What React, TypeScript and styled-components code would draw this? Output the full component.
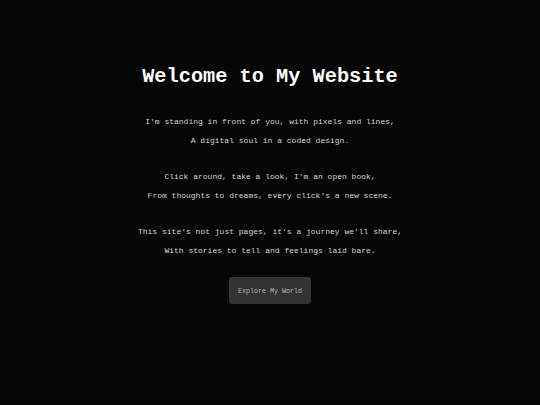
import styled, { createGlobalStyle } from "styled-components";

const GlobalStyle = createGlobalStyle`
  html, body {
    margin: 0;
    padding: 0;
    background-color: #050505;
  }
`;

const Page = styled.main`
  min-height: 405px;
  background-color: #050505;
  color: #d4d4d4;
  font-family: "Liberation Mono", "Courier New", monospace;
  display: flex;
  flex-direction: column;
  align-items: center;
  padding-top: 62px;
  box-sizing: border-box;
`;

const Title = styled.h1`
  margin: 0 0 20px;
  font-size: 20.3px;
  font-weight: 700;
  line-height: 30px;
  color: #ffffff;
`;

const Verse = styled.p`
  margin: 0 0 17px;
  font-size: 8px;
  line-height: 19px;
  text-align: center;
`;

const Button = styled.button`
  width: 82px;
  height: 27px;
  padding: 0;
  border: none;
  border-radius: 3px;
  background-color: #333333;
  color: #b4b4b4;
  font-family: inherit;
  font-size: 6.7px;
  cursor: pointer;
`;

const verses = [
  ["I'm standing in front of you, with pixels and lines,", "A digital soul in a coded design."],
  ["Click around, take a look, I'm an open book,", "From thoughts to dreams, every click's a new scene."],
  ["This site's not just pages, it's a journey we'll share,", "With stories to tell and feelings laid bare."],
];

const App = () => {
  return (
    <>
      <GlobalStyle />
      <Page>
        <Title>Welcome to My Website</Title>
        {verses.map((lines, i) => (
          <Verse key={i}>
            {lines[0]}
            <br />
            {lines[1]}
          </Verse>
        ))}
        <Button>Explore My World</Button>
      </Page>
    </>
  );
};

export default App;
